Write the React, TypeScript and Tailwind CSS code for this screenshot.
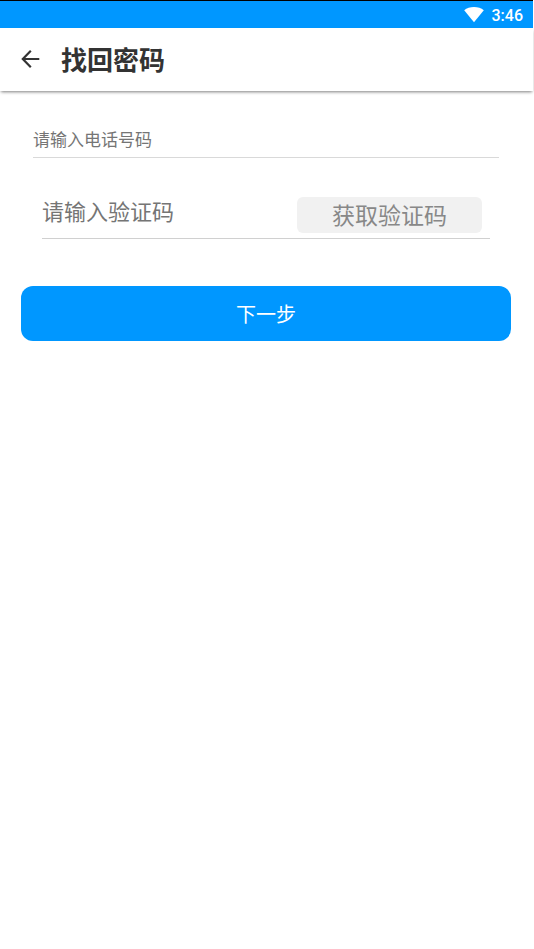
import { useState } from 'react';
import type { FormEvent } from 'react';

const StatusBar = () => (
  <div className="flex h-7 items-center justify-end gap-2 border-t border-black bg-[#0097ff] pr-[10px] text-white">
    <svg className="h-4 w-5" viewBox="0 0 20 16" fill="currentColor" aria-hidden="true">
      <path d="M10 15.2 0.2 3.2C2.8 1.1 6.2 0 10 0s7.2 1.1 9.8 3.2z" />
    </svg>
    <span className="pt-[2px] font-[Roboto,sans-serif] text-base leading-6 font-medium">3:46</span>
  </div>
);

const Header = () => (
  <header className="flex h-[63px] items-center gap-5 bg-white pb-[2px] pl-[21px] text-[#333333] shadow-[0_2px_3px_-1px_rgba(0,0,0,0.5)]">
    <button type="button" aria-label="返回" className="flex h-10 w-5 items-center justify-center">
      <svg
        className="h-5 w-5"
        viewBox="0 0 20 20"
        fill="none"
        stroke="currentColor"
        strokeWidth="2.2"
        aria-hidden="true"
      >
        <path d="M18.3 10H2.2M9.8 1.8 1.8 10l8 8.2" />
      </svg>
    </button>
    <h1 className="text-[26px] leading-8 font-bold">找回密码</h1>
  </header>
);

const App = () => {
  const [phone, setPhone] = useState('');
  const [code, setCode] = useState('');

  const handleSubmit = (e: FormEvent) => {
    e.preventDefault();
  };

  return (
    <div className="min-h-screen overflow-x-hidden bg-white pr-px font-['Noto_Sans_CJK_SC',sans-serif]">
      <StatusBar />
      <Header />

      <form onSubmit={handleSubmit} className="pt-8 pr-[22px] pl-[21px]">
        <div className="mx-3 border-b border-[#d9d9d9]">
          <input
            type="tel"
            aria-label="请输入电话号码"
            placeholder="请输入电话号码"
            value={phone}
            onChange={(e) => setPhone(e.target.value)}
            className="block h-[34px] w-full pb-1 text-[17px] text-[#333333] outline-none placeholder:text-[#757575]"
          />
        </div>

        <div className="mx-[21px] mt-[35px] flex items-end border-b border-[#d0d0d0] pb-[5px]">
          <input
            type="text"
            aria-label="请输入验证码"
            placeholder="请输入验证码"
            value={code}
            onChange={(e) => setCode(e.target.value)}
            className="h-10 min-w-0 flex-1 pb-[6px] text-[22px] text-[#333333] outline-none placeholder:text-[#757575]"
          />
          <button
            type="button"
            className="mr-2 h-9 w-[185px] rounded-md bg-[#f1f1f1] pb-[2px] text-[23px] leading-8 text-[#888888]"
          >
            获取验证码
          </button>
        </div>

        <button
          type="submit"
          className="mt-[47px] block h-[55px] w-full rounded-xl bg-[#0097ff] text-xl text-white"
        >
          下一步
        </button>
      </form>
    </div>
  );
};

export default App;
